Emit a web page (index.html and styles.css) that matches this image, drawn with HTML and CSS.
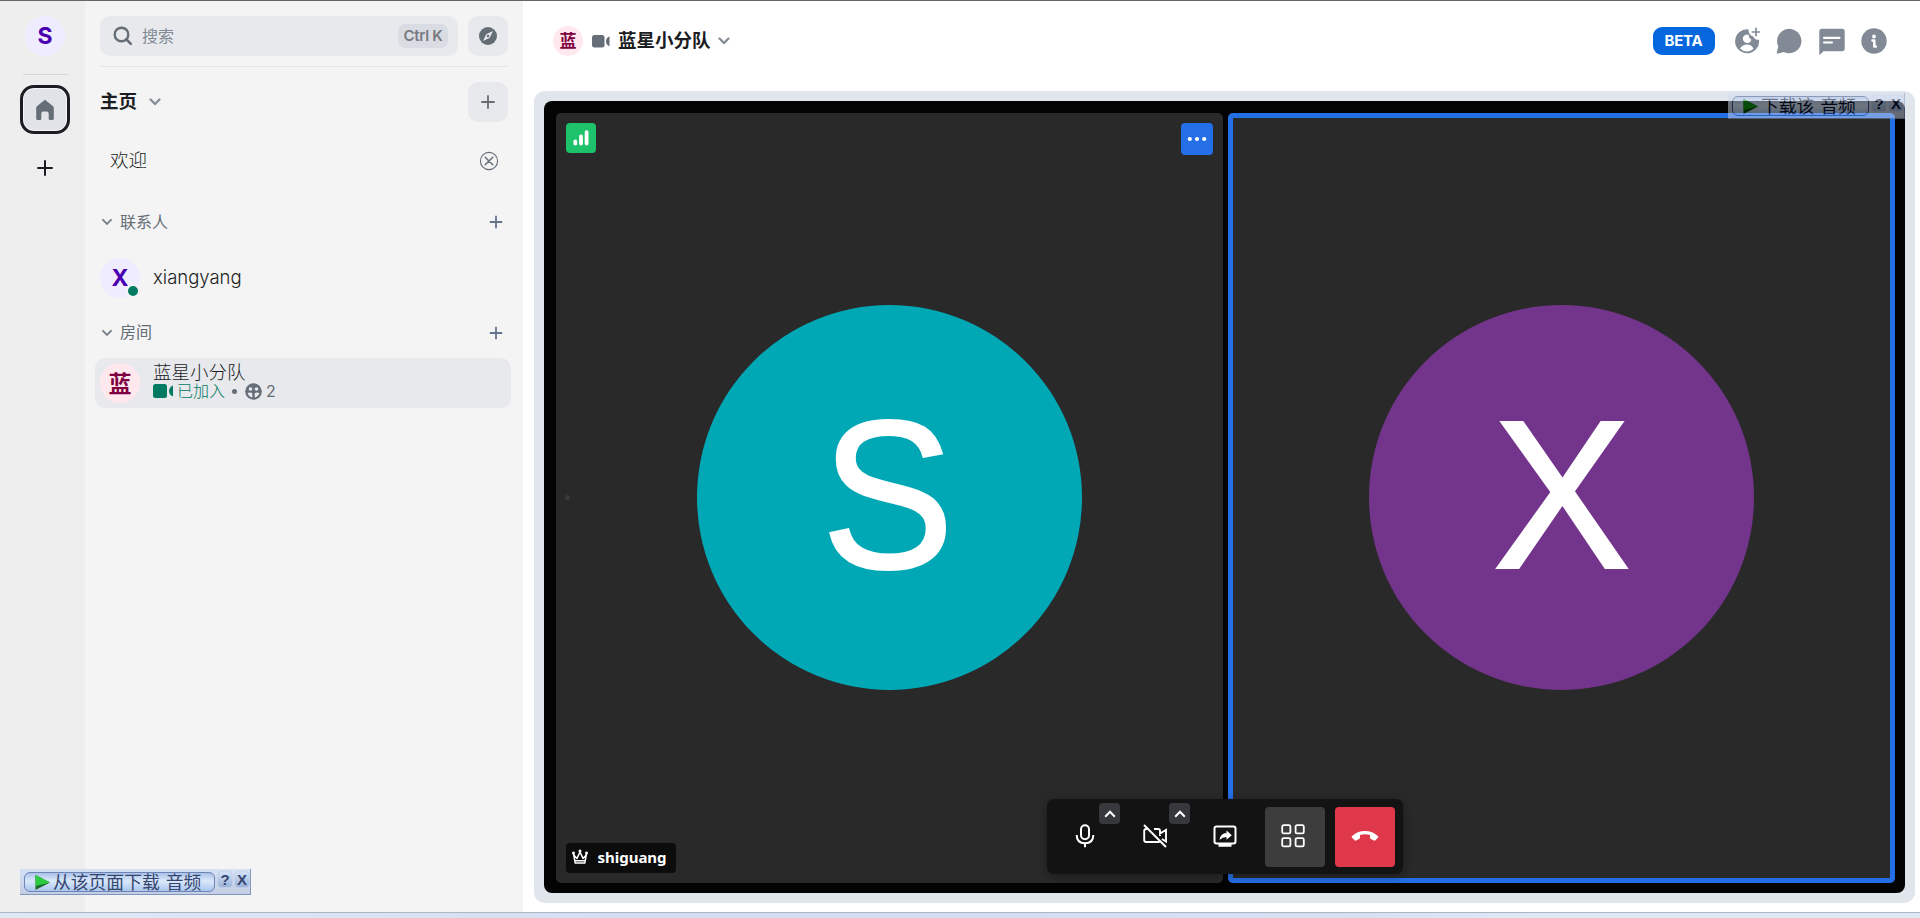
FILE: index.html
```html
<!DOCTYPE html>
<html lang="zh-CN">
<head>
    <meta charset="UTF-8">
    <meta name="viewport" content="width=device-width, initial-scale=1.0">
    <title>蓝星小分队</title>
    <link rel="stylesheet" href="styles.css">
</head>
<body>
    <div class="app">
        <!-- Spaces -->
        <nav class="rail">
            <div class="avatar avatar-user">S</div>
            <div class="rail-line"></div>
            <button class="rail-home">
                <svg width="20" height="22" viewBox="0 0 20 22"><path d="M10 .8 2.200 7Q1.200 7.800 1.200 9v10.500q0 1.500 1.500 1.500h2.300q1.300 0 1.300-1.300V14.500Q6.300 12.500 8.300 12.500h3.400q2 0 2 2v5.200q0 1.300 1.300 1.300h2.300q1.500 0 1.500-1.500V9q0-1.200-1-2Z" fill="#656d77"/></svg>
            </button>
            <button class="rail-add">
                <svg width="16" height="16" viewBox="0 0 16 16"><path d="M8 1v14M1 8h14" stroke="#1b1d22" stroke-width="2" stroke-linecap="round"/></svg>
            </button>
        </nav>

        <!-- Room list -->
        <aside class="sidebar">
            <div class="search-row">
                <div class="search">
                    <svg width="20" height="20" viewBox="0 0 20 20"><circle cx="8.500" cy="8.500" r="6.800" fill="none" stroke="#656d77" stroke-width="2.400"/><path d="m13.500 13.500 4.300 4.300" stroke="#656d77" stroke-width="2.600" stroke-linecap="round"/></svg>
                    <span class="search-text">搜索</span>
                    <kbd>Ctrl K</kbd>
                </div>
                <button class="square">
                    <svg width="18" height="18" viewBox="0 0 18 18"><circle cx="9" cy="9" r="9" fill="#656d77"/><path d="m14 4-3.200 6.800L4 14l3.200-6.800Z" fill="#e7e9ed"/><circle cx="9" cy="9" r="1.300" fill="#656d77"/></svg>
                </button>
            </div>
            <div class="home-row">
                <h1>主页</h1>
                <svg class="chevron" width="12" height="8" viewBox="0 0 12 8"><path d="m1.500 1.500 4.500 4.500 4.500-4.500" fill="none" stroke="#818a95" stroke-width="2.200" stroke-linecap="round"/></svg>
                <button class="square">
                    <svg width="14" height="14" viewBox="0 0 14 14"><path d="M7 1v12M1 7h12" stroke="#656d77" stroke-width="1.800" stroke-linecap="round"/></svg>
                </button>
            </div>
            <div class="welcome">
                <span>欢迎</span>
                <svg width="20" height="20" viewBox="0 0 20 20"><circle cx="10" cy="10" r="8.600" fill="none" stroke="#656d77" stroke-width="1.100"/><path d="m6.200 6.200 7.600 7.600M13.800 6.200l-7.600 7.600" stroke="#656d77" stroke-width="1.500" stroke-linecap="round"/></svg>
            </div>
            <div class="section">
                <svg width="10" height="8" viewBox="0 0 10 8"><path d="m1 1.800 4 4 4-4" fill="none" stroke="#77818c" stroke-width="1.900" stroke-linecap="round"/></svg>
                <span>联系人</span>
                <svg class="section-add" width="14" height="14" viewBox="0 0 14 14"><path d="M7 .8v12.400M.8 7h12.400" stroke="#64748b" stroke-width="1.800"/></svg>
            </div>
            <div class="room">
                <div class="avatar avatar-user">X<i class="online"></i></div>
                <div class="room-name">xiangyang</div>
            </div>
            <div class="section section-rooms">
                <svg width="10" height="8" viewBox="0 0 10 8"><path d="m1 1.800 4 4 4-4" fill="none" stroke="#77818c" stroke-width="1.900" stroke-linecap="round"/></svg>
                <span>房间</span>
                <svg class="section-add" width="14" height="14" viewBox="0 0 14 14"><path d="M7 .8v12.400M.8 7h12.400" stroke="#64748b" stroke-width="1.800"/></svg>
            </div>
            <div class="room room-active">
                <div class="avatar avatar-room">蓝</div>
                <div class="room-info">
                    <div class="room-name">蓝星小分队</div>
                    <div class="room-call">
                        <svg width="20" height="14" viewBox="0 0 20 14"><rect width="14" height="14" rx="2.500" fill="#007a61"/><path d="M20 1.500v11q-4-2-4-5.500t4-5.500Z" fill="#007a61"/></svg>
                        <span class="joined">已加入</span>
                        <span class="sep"></span>
                        <svg width="17" height="17" viewBox="0 0 17 17"><circle cx="8.500" cy="8.500" r="8.300" fill="#656d77"/><circle cx="5.500" cy="6" r="1.800" fill="#e7e9ed"/><circle cx="11.500" cy="6" r="1.800" fill="#e7e9ed"/><path d="M2.600 10q3-.9 4.700.3v4.200Q3.800 13.800 2.600 10ZM9.700 10.300q1.700-1.200 4.700-.3-1.200 3.800-4.700 4.500Z" fill="#e7e9ed"/></svg>
                        <span>2</span>
                    </div>
                </div>
            </div>
        </aside>

        <!-- Call -->
        <main class="main">
            <header class="header">
                <div class="avatar avatar-room avatar-small">蓝</div>
                <svg class="header-cam" width="18" height="13" viewBox="0 0 18 13"><rect width="12.500" height="12.500" rx="2.500" fill="#656d77"/><path d="M17.500 1.300v10q-3.500-1.500-3.500-5t3.500-5Z" fill="#656d77"/></svg>
                <h2>蓝星小分队</h2>
                <svg class="chevron" width="12" height="8" viewBox="0 0 12 8"><path d="m1.500 1.500 4.500 4.500 4.500-4.500" fill="none" stroke="#818a95" stroke-width="2.200" stroke-linecap="round"/></svg>
                <span class="beta">BETA</span>
                <div class="header-icons">
                    <svg width="26" height="28" viewBox="0 0 26 28"><path d="M14.300 2.300A12 12 0 1 0 25 12.800q-4.500.2-5.500-3.100-4.700-1-5.200-7.400Z" fill="#818a95"/><path d="M14.300 7.500q.6 3.800 3 4.900-.5 3.500-4.300 3.500-4-.3-4.200-4.300.3-4 5.500-4.100Z" fill="#fff"/><path d="M6 21.500q2.500-4 7-4t6.500 4q-2.500 3-6.500 3t-7-3Z" fill="#fff"/><path d="M22 .8v8.500M17.700 5h8.300" stroke="#818a95" stroke-width="1.700"/></svg>
                    <svg width="26" height="28" viewBox="0 0 26 28"><path d="M.7 26.300 2.300 19.500A12.200 12.200 0 1 1 8 25.100L2 26.600Q.8 26.800.7 26.300Z" fill="#818a95"/></svg>
                    <svg width="26" height="28" viewBox="0 0 26 28"><path d="M3 1.800h20q2.700 0 2.700 2.700v17q0 2.700-2.700 2.700H4.500L1.200 27.400Q.3 28 .3 27V4.500Q.3 1.800 3 1.800Z" fill="#818a95"/><path d="M5 10.800h15.500M5 15.500h8" stroke="#fff" stroke-width="2.200" stroke-linecap="round"/></svg>
                    <svg width="26" height="28" viewBox="0 0 26 28"><circle cx="13" cy="14" r="12.700" fill="#818a95"/><circle cx="13" cy="9.500" r="1.900" fill="#fff"/><path d="M11.500 13.500h1.800v6M13.300 19.500h1.500" fill="none" stroke="#fff" stroke-width="2.500" stroke-linecap="round" stroke-linejoin="round"/></svg>
                </div>
            </header>
            <section class="call">
                <div class="stage">
                    <div class="tile">
                        <div class="face face-s"><span>S</span></div>
                        <i class="speck"></i>
                        <div class="signal">
                            <svg width="16" height="16" viewBox="0 0 16 16"><path d="M2.300 11.500v2M8 6.500v7M13.600 2.200v11.300" stroke="#fff" stroke-width="3.800" stroke-linecap="round"/></svg>
                        </div>
                        <div class="more">
                            <svg width="20" height="6" viewBox="0 0 20 6"><circle cx="2.800" cy="3" r="2.100" fill="#fff"/><circle cx="10" cy="3" r="2.100" fill="#fff"/><circle cx="17.200" cy="3" r="2.100" fill="#fff"/></svg>
                        </div>
                        <div class="name">
                            <svg width="16" height="16" viewBox="0 0 16 16"><path d="m1.500 4.500 1.700 9.600h9.600l1.700-9.600M2 6.200l3 3.200 3-6.400 3 6.400 3-3.200M3 11.800h10" fill="none" stroke="#fff" stroke-width="1.500" stroke-linejoin="round"/><circle cx="1.500" cy="4" r="1.500" fill="#fff"/><circle cx="8" cy="2" r="1.500" fill="#fff"/><circle cx="14.500" cy="4" r="1.500" fill="#fff"/></svg>
                            <span>shiguang</span>
                        </div>
                    </div>
                    <div class="tile tile-active">
                        <div class="face face-x"><span>X</span></div>
                    </div>
                    <div class="toolbar">
                        <button class="tool">
                            <svg width="20" height="24" viewBox="0 0 20 24"><rect x="6" y="1.200" width="8" height="14" rx="4" fill="none" stroke="#fff" stroke-width="2"/><path d="M1.700 11q0 8.300 8.300 8.300t8.300-8.300M10 19.300v4" fill="none" stroke="#fff" stroke-width="2"/></svg>
                            <span class="caret"><svg width="12" height="8" viewBox="0 0 12 8"><path d="m1.200 6.700 4.800-5 4.800 5" fill="none" stroke="#fff" stroke-width="2"/></svg></span>
                        </button>
                        <button class="tool">
                            <svg width="24" height="24" viewBox="0 0 24 24"><path d="M4.500 5H3.200Q1.200 5 1.200 7v9q0 2 2 2h13.500M11 5h4q2 0 2 2v2.500l6-3.500v11.500l-4-2.500M17 9.500V12" fill="none" stroke="#fff" stroke-width="1.900"/><path d="m1 1 22 22" stroke="#fff" stroke-width="2"/></svg>
                            <span class="caret"><svg width="12" height="8" viewBox="0 0 12 8"><path d="m1.200 6.700 4.800-5 4.800 5" fill="none" stroke="#fff" stroke-width="2"/></svg></span>
                        </button>
                        <button class="tool">
                            <svg width="24" height="22" viewBox="0 0 24 22"><rect x="1.500" y="1.500" width="21" height="17" rx="2" fill="none" stroke="#fff" stroke-width="2"/><path d="M5.500 19h13v2.800h-13ZM6.500 15q.8-6.500 7-6.900V5.500l5.300 4.700-5.300 4.600v-2.700q-4 0-7 2.900Z" fill="#fff"/></svg>
                        </button>
                        <button class="tool tool-on">
                            <svg width="24" height="24" viewBox="0 0 24 24"><g fill="none" stroke="#fff" stroke-width="1.800"><rect x="1.200" y="1.200" width="8.200" height="8.200" rx="1.500"/><rect x="14.600" y="1.200" width="8.200" height="8.200" rx="1.500"/><rect x="1.200" y="14.200" width="8.200" height="8.200" rx="1.500"/><rect x="14.600" y="14.200" width="8.200" height="8.200" rx="1.500"/></g></svg>
                        </button>
                        <button class="tool tool-hangup">
                            <svg width="28" height="12" viewBox="0 0 28 12"><path d="M.9 6.200Q6.200.9 14 .9t13.100 5.300q.6.700 0 1.400l-2.600 2.700q-.7.700-1.600.3l-3-1.700q-.9-.5-.9-1.500V4.900Q14 3.400 9 4.900v2.500q0 1-.9 1.500l-3 1.700q-.9.400-1.600-.3L.9 7.600q-.6-.7 0-1.400Z" fill="#fff"/></svg>
                        </button>
                    </div>
                </div>
            </section>
        </main>
    </div>
    <div class="taskbar"></div>

    <!-- Floating download bars -->
    <div class="download download-page">
        <div class="download-btn">
            <svg width="15" height="15" viewBox="0 0 15 15"><path d="M.5 0v15L15 7.500Z" fill="#1d6b2a"/><path d="M.5 0v11L15 7.500Z" fill="#2ecc40"/></svg>
            <span>从该页面下载 音频</span>
        </div>
        <b>?</b><b>X</b>
    </div>
    <div class="download download-media">
        <div class="download-btn">
            <svg width="15" height="15" viewBox="0 0 15 15"><path d="M.5 0v15L15 7.500Z" fill="#004d08"/><path d="M.5 0v11L15 7.500Z" fill="#0a960f"/></svg>
            <span>下载该 音频</span>
        </div>
        <b>?</b><b>X</b>
    </div>
</body>
</html>
```

FILE: styles.css
```css
* {
    box-sizing: border-box;
}
body {
    margin: 0;
    height: 918px;
    overflow: hidden;
    font-family: Inter, "Noto Sans CJK SC", sans-serif;
    color: #1b1d22;
    background-color: #fff;
    border-top: 1px solid #666;
}
button {
    border: none;
    padding: 0;
    background: none;
    display: flex;
    align-items: center;
    justify-content: center;
}
svg {
    display: block;
    flex-shrink: 0;
}
h1, h2 {
    margin: 0;
    padding-bottom: 2px;
    font-size: 18.500px;
    font-weight: 700;
    line-height: 24px;
}
.app {
    display: flex;
    height: 911px;
}
.avatar {
    width: 40px;
    height: 40px;
    border-radius: 50%;
    display: flex;
    align-items: center;
    justify-content: center;
    flex-shrink: 0;
    font-weight: 700;
    font-size: 23px;
    position: relative;
}
.avatar-user {
    background-color: #f0ecff;
    color: #4a00b0;
}
.avatar-room {
    padding-bottom: 3px;
    background-color: #ffe8ed;
    color: #7f0040;
}
.avatar-small {
    width: 30px;
    height: 30px;
    font-size: 17px;
}
.online {
    position: absolute;
    right: 0;
    bottom: 0;
    width: 14px;
    height: 14px;
    border: 2px solid #f4f4f4;
    border-radius: 50%;
    background-color: #007a61;
}

/* Spaces */
.rail {
    width: 85px;
    background-color: #eee;
    display: flex;
    flex-direction: column;
    align-items: center;
    padding: 15px 0 0 5px;
}
.rail-line {
    width: 45px;
    height: 1px;
    margin: 18px 0 10px;
    background-color: #d4d7dd;
}
.rail-home {
    width: 50px;
    height: 49px;
    border: 3px solid #1b1d22;
    border-radius: 14px;
    background-color: #e1e3e8;
    box-shadow: inset 0 0 0 1px #f4f4f4;
}
.rail-add {
    margin-top: 26px;
}

/* Room list */
.sidebar {
    width: 438px;
    background-color: #f4f4f4;
    padding: 15px 12px 0 10px;
}
.search-row {
    display: flex;
    justify-content: space-between;
    margin: 0 3px 0 5px;
    padding-bottom: 10px;
    border-bottom: 1px solid #e1e6ec;
}
.search {
    width: 358px;
    height: 40px;
    border-radius: 10px;
    background-color: #e7e9ed;
    display: flex;
    align-items: center;
    padding: 0 10px 0 13px;
}
.search-text {
    margin-left: 9px;
    padding-bottom: 2px;
    font-size: 16px;
    color: #818a95;
}
kbd {
    margin-left: auto;
    width: 50px;
    height: 24px;
    border-radius: 7px;
    background-color: #d9dce3;
    color: #77797e;
    font-family: Inter, sans-serif;
    font-size: 15px;
    font-weight: 600;
    letter-spacing: -0.300px;
    line-height: 23px;
    text-align: center;
}
.square {
    width: 40px;
    height: 40px;
    border-radius: 10px;
    background-color: #e7e9ed;
}
.home-row {
    display: flex;
    align-items: center;
    margin: 15px 3px 0 5px;
}
.home-row .square {
    margin-left: auto;
}
.chevron {
    margin-left: 12px;
}
.welcome {
    display: flex;
    align-items: center;
    justify-content: space-between;
    height: 40px;
    margin: 19px 12px 0 15px;
    font-size: 18.500px;
    font-weight: 300;
}
.welcome span {
    padding-bottom: 4px;
}
.section {
    display: flex;
    align-items: center;
    height: 24px;
    margin: 29px 8px 0 7px;
    font-size: 16px;
    color: #656d77;
}
.section span {
    margin-left: 8px;
    padding-bottom: 2px;
}
.section-add {
    margin-left: auto;
}
.section-rooms {
    margin-top: 18px;
}
.section-rooms span {
    padding-bottom: 4px;
}
.room {
    display: flex;
    align-items: center;
    height: 50px;
    padding-left: 5px;
    margin-top: 19px;
    border-radius: 10px;
}
.room-active {
    margin-top: 13px;
    background-color: #e7e9ed;
}
.room-name {
    margin-left: 13px;
    padding-bottom: 2px;
    font-size: 18.500px;
    font-weight: 300;
}
.room-info {
    padding-bottom: 6px;
}
.room-info .room-name {
    padding: 0;
    line-height: 22px;
}
.room-call {
    display: flex;
    align-items: center;
    margin-left: 13px;
    height: 17px;
    font-size: 16px;
    font-weight: 300;
    line-height: 17px;
    color: #656d77;
}
.joined {
    margin-left: 4px;
    color: #007a61;
}
.sep {
    width: 5px;
    height: 5px;
    margin: 0 8px 0 7px;
    border-radius: 50%;
    background-color: #656d77;
}
.room-call span:last-child {
    margin-left: 4px;
    font-weight: 400;
}

/* Header */
.main {
    flex: 1;
}
.header {
    display: flex;
    align-items: center;
    height: 80px;
    padding: 0 33px 0 30px;
}
.header-cam {
    margin: 0 8px 0 9px;
}
.header h2 + .chevron {
    margin-left: 7px;
}
.beta {
    margin-left: auto;
    width: 62px;
    height: 28px;
    border-radius: 9px;
    background-color: #0467dd;
    color: #fff;
    font-size: 15px;
    font-weight: 700;
    letter-spacing: -0.200px;
    line-height: 28px;
    text-align: center;
}
.header-icons {
    display: flex;
    gap: 16.500px;
    margin-left: 19px;
}

/* Call */
.call {
    width: 1381px;
    height: 812px;
    margin: 10px 0 0 11px;
    padding: 10px;
    border-radius: 11px;
    background-color: #e1e5ec;
}
.stage {
    position: relative;
    display: flex;
    gap: 5px;
    height: 792px;
    padding: 12px 10px 10px 12px;
    border-radius: 8px;
    background-color: #030303;
}
.tile {
    position: relative;
    width: 667px;
    display: flex;
    align-items: center;
    justify-content: center;
    padding: 0 1px 1px 0;
    border-radius: 5px;
    background-color: #292929;
}
.tile-active {
    padding-right: 0;
    box-shadow: inset 0 0 0 5px #246fe5;
}
.face {
    width: 385px;
    height: 385px;
    padding-bottom: 5px;
    border-radius: 50%;
    display: flex;
    align-items: center;
    justify-content: center;
    color: #fff;
    font-family: "Liberation Sans", Arial, sans-serif;
    font-size: 212px;
    line-height: 1;
    -webkit-text-stroke: 2px #fff;
}
.face-s {
    padding-right: 2px;
    background-color: #00a8b6;
}
.face-s span {
    transform: scaleX(0.940);
}
.face-x {
    background-color: #73348c;
}
.face-x span {
    transform: scaleX(0.980);
}
.speck {
    position: absolute;
    left: 9px;
    top: 382px;
    width: 5px;
    height: 5px;
    border-radius: 50%;
    background-color: #3b3b3b;
}
.signal, .more, .name {
    position: absolute;
    display: flex;
    align-items: center;
    justify-content: center;
    border-radius: 4px;
}
.signal {
    left: 10px;
    top: 10px;
    width: 30px;
    height: 30px;
    background-color: #1ec26a;
}
.more {
    right: 10px;
    top: 10px;
    width: 32px;
    height: 32px;
    padding: 0 1px 1px 0;
    background-color: #246fe5;
}
.name {
    left: 10px;
    bottom: 10px;
    width: 110px;
    height: 30px;
    gap: 9px;
    padding: 0 3px 2px 0;
    background-color: #0c0c0c;
    color: #fff;
    font-family: "Noto Sans", sans-serif;
    font-size: 15px;
    font-weight: 700;
}
.toolbar {
    position: absolute;
    left: 503px;
    bottom: 19px;
    display: flex;
    gap: 10px;
    width: 356px;
    height: 75px;
    padding: 8px 8px 7px 8px;
    border-radius: 7px;
    background-color: #131313;
    box-shadow: 0 2px 10px rgba(0, 0, 0, 0.35);
}
.tool {
    position: relative;
    width: 60px;
    height: 60px;
    padding: 0 1px 2px 0;
    border-radius: 4px;
}
.tool-on {
    padding-right: 4px;
    background-color: #3d3d3d;
}
.tool-hangup {
    background-color: #de384a;
}
.caret {
    position: absolute;
    right: -5px;
    top: -4px;
    width: 21px;
    height: 21px;
    display: flex;
    align-items: center;
    justify-content: center;
    border-radius: 4px;
    background-color: #36383c;
}
.taskbar {
    height: 6px;
    border-top: 1px solid #adb5c3;
    background: linear-gradient(90deg, #dfe9f5, #d3def3 35%, #d5e0f3 70%, #dfe9f5 80%);
}

/* Floating download bars */
.download {
    position: absolute;
    display: flex;
    gap: 3px;
    height: 26px;
    padding: 3px 1px 3px 4px;
    background: linear-gradient(#d5e1f6, #c3cee4);
    border-right: 1px solid #7f96bd;
    border-bottom: 1px solid #7f96bd;
}
.download-page {
    left: 20px;
    top: 869px;
    width: 231px;
}
.download-media {
    left: 1728px;
    top: 93px;
    width: 177px;
    opacity: 0.500;
}
.download-btn {
    display: flex;
    align-items: center;
    gap: 3px;
    flex: 1;
    height: 20px;
    padding-left: 10px;
    border: 1px solid #7083b5;
    border-radius: 6px;
    background: linear-gradient(#a9c2e8, #dbe8fa 45%, #a9c6ee);
    color: #35456e;
    font-family: "Noto Sans CJK SC", sans-serif;
    font-size: 17.800px;
    line-height: 16px;
    word-spacing: 2px;
    white-space: nowrap;
}
.download-btn span {
    padding-bottom: 2px;
}
.download b {
    width: 14px;
    height: 15px;
    border-radius: 4px;
    background: linear-gradient(#d3e1f7, #9bb3da);
    box-shadow: 0 0 1px #7083b5;
    color: #35456e;
    font-family: "Liberation Sans", Arial, sans-serif;
    font-size: 15px;
    line-height: 16px;
    text-align: center;
}
.download-media .download-btn, .download-media b {
    color: #000a2e;
    border-color: #3b4f8c;
}
```
